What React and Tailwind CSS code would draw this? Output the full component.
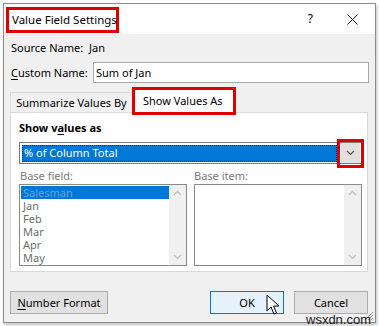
import React from "react";

const font = { fontFamily: '"Noto Sans", "Open Sans", sans-serif' };

function ChevronUp() {
  return (
    <svg width="9" height="6" viewBox="0 0 9 6" className="block">
      <path d="M1 5 L4.5 1.5 L8 5" fill="none" stroke="#c2c2c2" strokeWidth="1.3" />
    </svg>
  );
}
function ChevronDown({ color = "#c2c2c2" }) {
  return (
    <svg width="9" height="6" viewBox="0 0 9 6" className="block">
      <path d="M1 1 L4.5 4.5 L8 1" fill="none" stroke={color} strokeWidth="1.2" />
    </svg>
  );
}

function Scrollbar() {
  return (
    <div className="w-[17px] h-full bg-[#f0f0f0] flex flex-col items-center justify-between py-[5px]">
      <ChevronUp />
      <ChevronDown />
    </div>
  );
}

export default function App() {
  return (
    <div className="w-[379px] h-[326px] bg-white relative overflow-hidden text-[11px] leading-[14px] whitespace-nowrap text-black" style={font}>
      <div className="ml-[3px] mt-[3px] w-[373px] h-[320px] border border-[#8c8c8c] bg-[#f0f0f0] shadow-[1px_2px_3px_rgba(0,0,0,0.25)] flex flex-col">
        {/* Title bar */}
        <div className="h-[30px] bg-white flex items-start shrink-0">
          <div className="ml-[2px] mt-[3px] h-[26px] w-[113px] border-[3px] border-[#e00000] pl-[3px] flex items-center text-[11.5px]">
            Value Field Settings
          </div>
          <div className="ml-auto h-full flex items-center mr-[17px]">
            <span className="text-[12px] mr-[34px] leading-none">?</span>
            <svg width="11" height="11" viewBox="0 0 11 11">
              <path d="M0.5 0.5 L10.5 10.5 M10.5 0.5 L0.5 10.5" stroke="#111" strokeWidth="1" />
            </svg>
          </div>
        </div>

        {/* Body */}
        <div className="pl-[7px] pr-[6px]">
          <div className="mt-[4px] h-[20px] flex items-center">
            <span className="w-[78px]">Source Name:</span>
            <span>Jan</span>
          </div>
          <div className="mt-[4px] h-[21px] flex items-center">
            <span className="w-[82px]">
              <span className="underline underline-offset-2">C</span>ustom Name:
            </span>
            <div className="flex-1 h-[21px] border border-[#a8a8a8] bg-white flex items-center pl-[2px]">
              Sum of Jan
            </div>
          </div>
        </div>

        {/* Tabs */}
        <div className="ml-[6px] mr-[7px] mt-[5px]">
          <div className="h-[24px] flex items-end">
            <div className="w-[123px] h-[20px] border border-b-0 border-[#d9d9d9] bg-[#f0f0f0] flex items-center justify-center">
              Summarize Values By
            </div>
            <div className="relative w-[102px] h-[25px] -mb-px bg-white border border-b-0 border-[#d9d9d9] flex items-center pl-[9px] z-10">
              Show Values As
              <div className="absolute -top-[2px] -left-[2px] -right-[2px] -bottom-[2px] border-[3px] border-[#e00000]"></div>
            </div>
          </div>
          <div className="h-[160px] border border-[#d9d9d9] bg-white">
            <div className="mt-[5px] h-[20px] pl-[8px] flex items-center font-bold">
              Show v<span className="underline underline-offset-2">a</span>lues as
            </div>
            <div className="relative mt-[4px] ml-[8px] mr-[5px] h-[22px] border border-[#7a7a7a] bg-white flex items-center">
              <div className="ml-[2px] w-[315px] h-[17px] bg-[#0078d7] text-white flex items-center pl-[2px] outline-1 outline-dotted outline-[#333] -outline-offset-1">
                % of Column Total
              </div>
              <div className="ml-auto mr-[1px] w-[19px] h-[20px] bg-[#e1e1e1] flex items-center justify-center">
                <ChevronDown color="#555" />
              </div>
              <div className="absolute -top-[4px] -right-[3px] w-[27px] h-[29px] border-[3px] border-[#e00000]"></div>
            </div>
            <div className="mt-[4px] h-[16px] ml-[9px] flex items-center text-[#7a7a7a]">
              <span className="w-[174px]">Base field:</span>
              <span>Base item:</span>
            </div>
            <div className="ml-[8px] flex gap-[7px]">
              <div className="w-[168px] h-[82px] border border-[#8a8a8a] bg-white flex">
                <div className="flex-1 pt-[1px] pl-[1px] text-[#6d6d6d] leading-[13px]">
                  <div className="h-[13px] bg-[#0078d7] text-[#6b9fd3] pl-[2px] flex items-center">Salesman</div>
                  <div className="h-[13px] pl-[2px] flex items-center">Jan</div>
                  <div className="h-[13px] pl-[2px] flex items-center">Feb</div>
                  <div className="h-[13px] pl-[2px] flex items-center">Mar</div>
                  <div className="h-[13px] pl-[2px] flex items-center">Apr</div>
                  <div className="h-[13px] pl-[2px] flex items-center">May</div>
                </div>
                <Scrollbar />
              </div>
              <div className="w-[168px] h-[82px] border border-[#8a8a8a] bg-white flex">
                <div className="flex-1"></div>
                <Scrollbar />
              </div>
            </div>
          </div>
        </div>

        {/* Buttons */}
        <div className="mt-[19px] ml-[6px] mr-[7px] flex items-center">
          <div className="w-[98px] h-[23px] border border-[#adadad] bg-[#e1e1e1] flex items-center justify-center">
            <span>
              <span className="underline underline-offset-2">N</span>umber Format
            </span>
          </div>
          <div className="ml-auto w-[74px] h-[23px] border border-[#0078d7] bg-[#e5f1fb] flex items-center justify-center">
            OK
          </div>
          <div className="ml-[10px] w-[74px] h-[23px] border border-[#adadad] bg-[#e1e1e1] flex items-center justify-center">
            Cancel
          </div>
        </div>
      </div>

      {/* Mouse cursor */}
      <svg className="absolute left-[266px] top-[294px]" width="14" height="22" viewBox="0 0 14 22">
        <path d="M1 1 L1 17 L5 13 L8 20 L10.5 19 L7.5 12 L13 12 Z" fill="#fff" stroke="#000" strokeWidth="1" strokeLinejoin="round" />
      </svg>

      {/* Resize grip */}
      <svg className="absolute left-[364px] top-[311px]" width="10" height="10" viewBox="0 0 10 10">
        <path d="M9 1 L1 9 M9 4 L4 9 M9 7 L7 9" stroke="#9a9a9a" strokeWidth="1" />
      </svg>

      {/* Watermark */}
      <div className="absolute left-[306px] top-[313px] text-[13px] leading-none text-[#222]" style={{ fontFamily: '"Liberation Sans", Arial, sans-serif' }}>
        wsxdn.com
      </div>
    </div>
  );
}
